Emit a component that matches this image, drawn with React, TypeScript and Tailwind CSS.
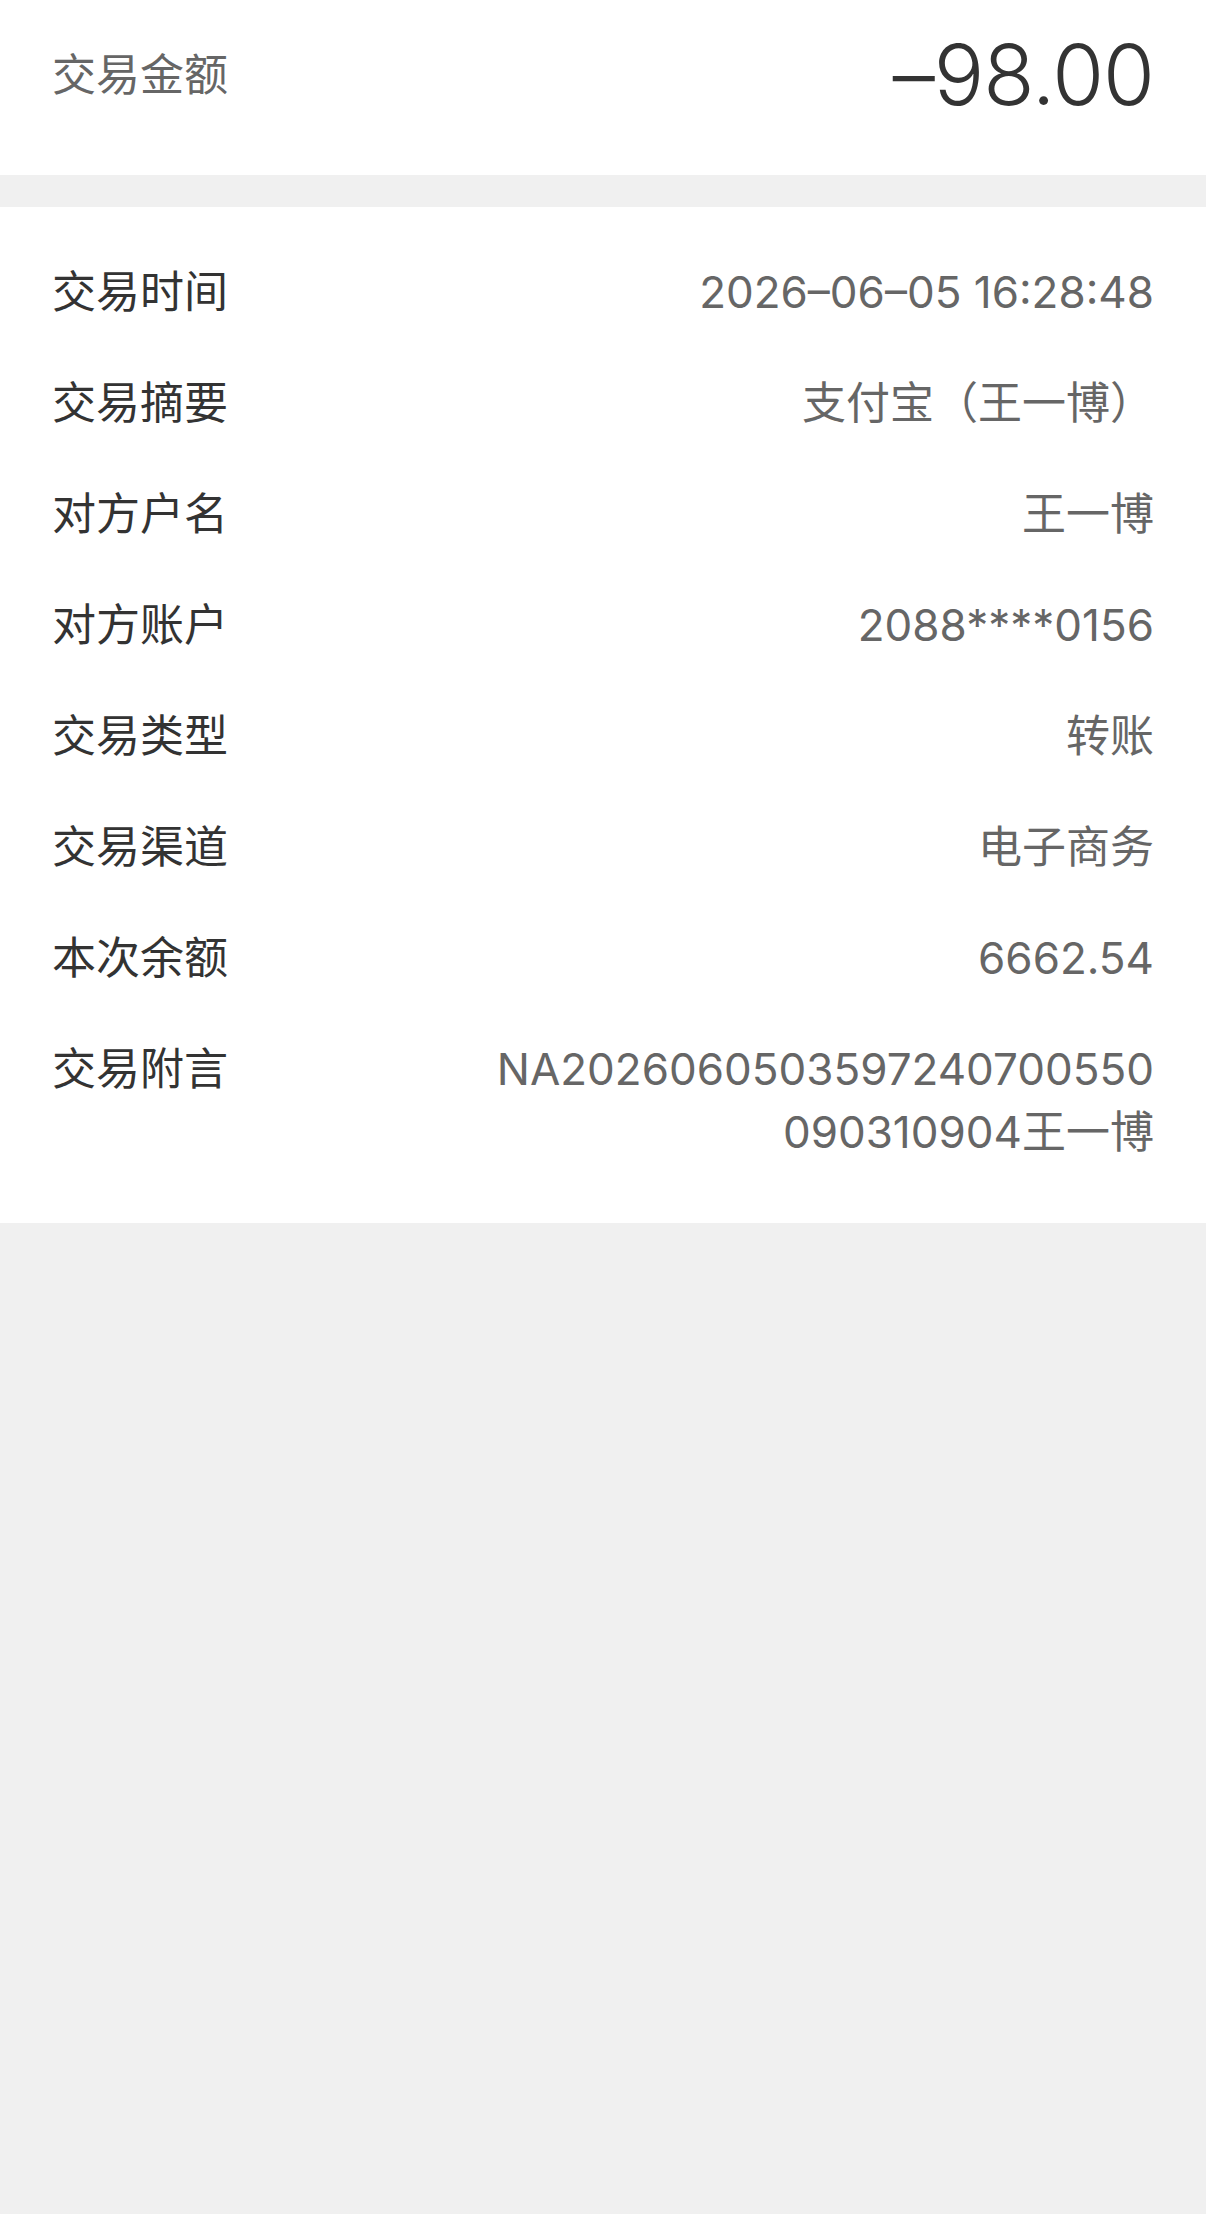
const rows: { label: string; value: string }[] = [
  { label: '交易时间', value: '2026–06–05 16:28:48' },
  { label: '交易摘要', value: '支付宝（王一博）' },
  { label: '对方户名', value: '王一博' },
  { label: '对方账户', value: '2088****0156' },
  { label: '交易类型', value: '转账' },
  { label: '交易渠道', value: '电子商务' },
  { label: '本次余额', value: '6662.54' },
  { label: '交易附言', value: 'NA2026060503597240700550090310904王一博' },
]

const font = { fontFamily: '"Inter", "Noto Sans CJK SC", sans-serif' }

export default function App() {
  return (
    <div className="min-h-[2214px] w-full bg-[#f0f0f0]" style={font}>
      <div className="flex h-[175px] items-center justify-between bg-white px-[52px] pb-[26px]">
        <span className="text-[44px] text-[#666]">交易金额</span>
        <span className="text-[84px] font-light leading-none tracking-[-1px] text-[#333]">–98.00</span>
      </div>

      <div className="mt-[32px] bg-white px-[52px] pt-[30px] pb-[35px]">
        {rows.map((r) => (
          <div key={r.label} className="flex items-start justify-between gap-8 py-[24px] text-[44px] leading-[63px]">
            <span className="shrink-0 text-[#333]">{r.label}</span>
            <span className="max-w-[680px] text-right break-all text-[#666]">{r.value}</span>
          </div>
        ))}
      </div>
    </div>
  )
}
